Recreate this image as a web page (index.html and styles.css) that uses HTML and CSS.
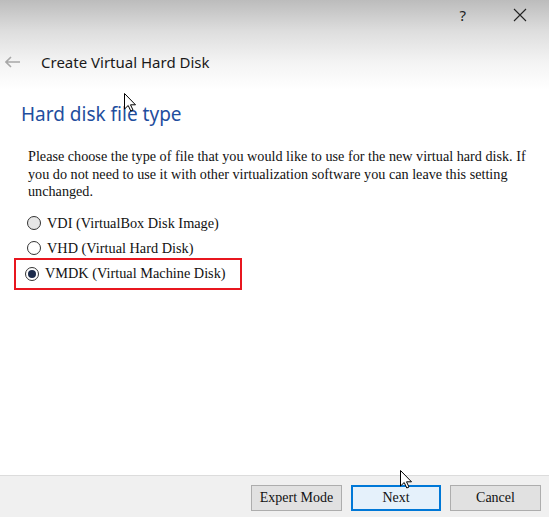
FILE: index.html
```html
<!DOCTYPE html>
<html>
<head>
<meta charset="utf-8">
<link rel="stylesheet" href="styles.css">
</head>
<body>
<div class="dialog">
  <div class="header">
    <div class="titlebar">
      <span class="help">?</span>
      <svg class="close" width="14" height="14" viewBox="0 0 14 14"><path d="M1 1 L13 13 M13 1 L1 13" stroke="#222" stroke-width="1.1" fill="none"/></svg>
    </div>
    <div class="nav">
      <svg class="back" width="16" height="12" viewBox="0 0 16 12"><path d="M1 6 H15 M6 1 L1 6 L6 11" stroke="#a8a8a8" stroke-width="1.6" fill="none"/></svg>
      <span class="title">Create Virtual Hard Disk</span>
    </div>
  </div>
  <div class="content">
    <h1 class="heading">Hard disk file type</h1>
    <p class="desc">Please choose the type of file that you would like to use for the new virtual hard disk. If you do not need to use it with other virtualization software you can leave this setting unchanged.</p>
    <div class="options">
      <label class="option"><span class="radio hover"></span><span>VDI (VirtualBox Disk Image)</span></label>
      <label class="option"><span class="radio"></span><span>VHD (Virtual Hard Disk)</span></label>
      <label class="option selected"><span class="radio checked"></span><span>VMDK (Virtual Machine Disk)</span></label>
    </div>
  </div>
  <div class="footer">
    <button class="btn">Expert Mode</button>
    <button class="btn primary">Next</button>
    <button class="btn">Cancel</button>
  </div>
  <svg class="cursor c1" width="12" height="19" viewBox="0 0 12 19"><path d="M0.5 0.5 L0.5 16 L4.2 12.5 L6.8 18 L9 17 L6.5 11.8 L11.5 11.8 Z" fill="#fff" stroke="#000" stroke-width="1"/></svg>
  <svg class="cursor c2" width="12" height="19" viewBox="0 0 12 19"><path d="M0.5 0.5 L0.5 16 L4.2 12.5 L6.8 18 L9 17 L6.5 11.8 L11.5 11.8 Z" fill="#fff" stroke="#000" stroke-width="1"/></svg>
</div>
</body>
</html>
```
FILE: styles.css
```css
html, body {
  margin: 0;
  padding: 0;
  background: #fff;
}
.dialog {
  position: relative;
  width: 549px;
  height: 517px;
  display: flex;
  flex-direction: column;
  overflow: hidden;
  background: #fff;
}
.header {
  height: 90px;
  background: linear-gradient(to bottom, #bcbcbc 0%, #dedede 35%, #f4f4f4 70%, #ffffff 100%);
  display: flex;
  flex-direction: column;
}
.titlebar {
  height: 30px;
  display: flex;
  justify-content: flex-end;
  align-items: center;
  gap: 47px;
  padding-right: 22px;
}
.help {
  font-family: "Noto Sans", sans-serif;
  font-size: 15px;
  color: #222;
  line-height: 1;
}
.close { display: block; }
.nav {
  display: flex;
  align-items: center;
  height: 32px;
  margin-top: 16px;
  padding-left: 5px;
}
.back { display: block; margin-right: 20px; }
.title {
  font-family: "Noto Sans", sans-serif;
  font-size: 15px;
  color: #1a1a1a;
}
.content {
  flex: 1;
  padding: 11px 14px 0 21px;
}
.heading {
  margin: 0;
  font-family: "Noto Sans", sans-serif;
  font-weight: normal;
  font-size: 19px;
  color: #1f4e9e;
  line-height: 26px;
}
.desc {
  margin: 21px 0 0 7px;
  font-family: "Liberation Serif", serif;
  font-size: 14.2px;
  line-height: 17.5px;
  color: #111;
}
.options {
  margin-top: 10px;
  display: flex;
  flex-direction: column;
  gap: 0;
  margin-left: -7px;
}
.option {
  display: flex;
  align-items: center;
  height: 25px;
  padding-left: 11px;
  font-family: "Liberation Serif", serif;
  font-size: 14.3px;
  color: #111;
  width: 214px;
  border: 2px solid transparent;
  box-sizing: border-box;
}
.option.selected {
  border-color: #e8161f;
  height: 32px;
  width: 228px;
  margin-top: -3px;
  padding-left: 9px;
}
.radio {
  width: 12px;
  height: 12px;
  border: 1px solid #333;
  border-radius: 50%;
  margin-right: 6px;
  background: #fff;
  position: relative;
  flex: none;
}
.radio.hover { background: #e6e6e6; }
.radio.checked::after {
  content: "";
  position: absolute;
  left: 2px;
  top: 2px;
  width: 8px;
  height: 8px;
  border-radius: 50%;
  background: #1b2a4a;
}
.footer {
  height: 42px;
  background: #f0f0f0;
  border-top: 1px solid #dcdcdc;
  display: flex;
  align-items: center;
  justify-content: flex-end;
  gap: 9px;
  padding-right: 8px;
  padding-top: 2px;
  box-sizing: border-box;
}
.btn {
  width: 91px;
  height: 26px;
  margin: 0;
  padding: 0;
  font-family: "Liberation Serif", serif;
  font-size: 14px;
  color: #111;
  background: #e1e1e1;
  border: 1px solid #adadad;
}
.btn.primary {
  width: 90px;
  background: #e5f1fb;
  border: 2px solid #0078d7;
}
.cursor { position: absolute; }
.c1 { left: 124px; top: 93px; }
.c2 { left: 400px; top: 470px; }
```
